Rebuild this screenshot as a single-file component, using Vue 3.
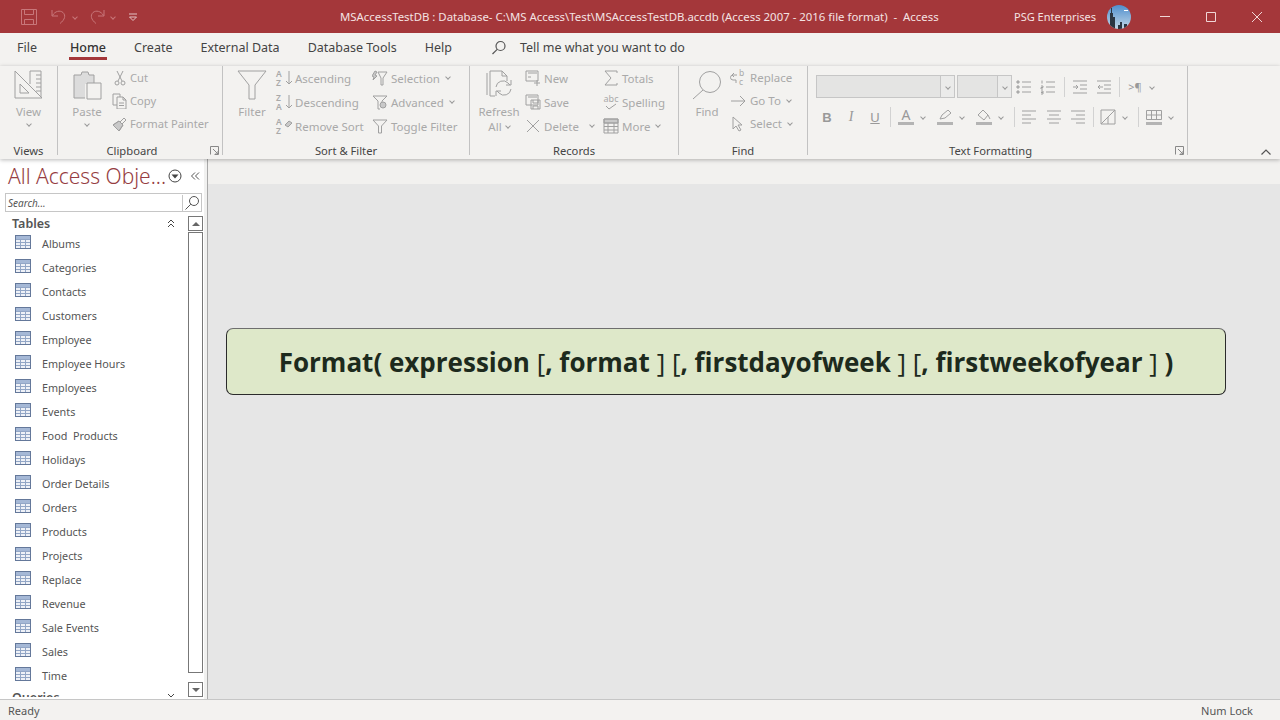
<template>
  <div class="app">
    <header class="titlebar">
      <div class="qat">
        <svg class="qat-save" width="18" height="18" viewBox="0 0 18 18"><path d="M1.500 1.500h15v15h-15zM4.500 1.500v5h9v-5M4.500 16.500v-5h9v5" /></svg>
        <svg class="qat-undo" width="18" height="18" viewBox="0 0 18 18"><path d="M2 2v6h6M2.500 7.500C5 3 10 2 13 4.500c3 3 2 7-3 11" /></svg>
        <i class="chev qc"></i>
        <svg class="qat-redo" width="18" height="18" viewBox="0 0 18 18"><path d="M16 2v6h-6M15.500 7.500C13 3 8 2 5 4.500c-3 3-2 7 3 11" /></svg>
        <i class="chev qc"></i>
        <svg class="qat-more" width="10" height="10" viewBox="0 0 10 10"><path d="M1 2h8M1.500 5h7L5 8.500z" /></svg>
      </div>
      <div class="doc-title">MSAccessTestDB : Database- C:\MS Access\Test\MSAccessTestDB.accdb (Access 2007 - 2016 file format)&nbsp; -&nbsp; Access</div>
      <div class="user">PSG Enterprises</div>
      <svg class="avatar" width="24" height="24" viewBox="0 0 24 24">
        <defs>
          <clipPath id="av"><circle cx="12" cy="12" r="12" /></clipPath>
          <linearGradient id="sky" x1="0" y1="0" x2="0" y2="1"><stop offset="0" stop-color="#4f8fce" /><stop offset="1" stop-color="#c3d6e6" /></linearGradient>
        </defs>
        <g clip-path="url(#av)">
          <rect width="24" height="24" fill="url(#sky)" />
          <path d="M3 24V8h1V3h1v5h1v4h2v12zM11 24v-4h2v-3h2v7zM17 24v-5h3v5z" fill="#2b3542" />
          <path d="M17 5h4v1h-4z" fill="#fff" />
        </g>
      </svg>
      <div class="win-btns">
        <svg width="12" height="12" viewBox="0 0 12 12"><path d="M1 5.500h10" /></svg>
        <svg width="12" height="12" viewBox="0 0 12 12"><path d="M1.500 1.500h9v9h-9z" /></svg>
        <svg width="12" height="12" viewBox="0 0 12 12"><path d="M1 1l10 10M11 1L1 11" /></svg>
      </div>
    </header>

    <nav class="tabs">
      <span v-for="t in tabs" :key="t" class="tab" :class="{ active: t === 'Home' }">{{ t }}</span>
      <svg class="tell-icon" width="16" height="16" viewBox="0 0 16 16"><circle cx="9.500" cy="6" r="4.500" /><path d="M6.200 9.300L1.500 14" /></svg>
      <span class="tell">Tell me what you want to do</span>
    </nav>

    <section class="ribbon">
      <!-- Views -->
      <div class="group g-views">
        <div class="body">
          <div class="large view-btn">
            <svg width="30" height="30" viewBox="0 0 30 30">
              <path d="M1 1l27 27H1zM6 14l9 9H6zM16 14V1h11v26M22 5h5M22 9h5M22 13h5M22 17h5M22 21h5" />
            </svg>
            <span>View</span>
            <i class="chev"></i>
          </div>
        </div>
        <div class="glabel">Views</div>
      </div>

      <!-- Clipboard -->
      <div class="group g-clip">
        <div class="body">
          <div class="large paste-btn">
            <svg width="30" height="30" viewBox="0 0 30 30">
              <path class="pale" d="M2 5h7l1-3h6l1 3h5v9H13v14H2z" />
              <path d="M2 5h7l1-3h6l1 3h5v9M2 5v23h11" />
              <path class="white" d="M15 13h14v16H15z" />
            </svg>
            <span>Paste</span>
            <i class="chev"></i>
          </div>
          <div class="smalls tight">
            <div class="row">
              <svg width="16" height="16" viewBox="0 0 16 16"><path d="M5 1l5 10M11 1L6 11" /><circle cx="5" cy="13" r="2" /><circle cx="11" cy="13" r="2" /></svg>
              <span>Cut</span>
            </div>
            <div class="row">
              <svg width="16" height="16" viewBox="0 0 16 16"><path d="M5 12H1V1h7v3M5 4h6l3 3v9H5zM7 10h5M7 12.500h5M11 4v3h3" /></svg>
              <span>Copy</span>
            </div>
            <div class="row">
              <svg width="16" height="16" viewBox="0 0 16 16"><path class="fill" d="M1 9l6-4 4 4-4 6z" /><path d="M1 9l6-4 4 4-4 6zM8 6l4-4 2 2-4 4" /></svg>
              <span>Format Painter</span>
            </div>
          </div>
        </div>
        <div class="glabel">Clipboard</div>
        <svg class="launcher" width="9" height="9" viewBox="0 0 9 9"><path d="M.5 8.500v-8h8v8h-4M3 3l5 5M8 5v3H5" /></svg>
      </div>

      <!-- Sort & Filter -->
      <div class="group g-sort">
        <div class="body">
          <div class="large filter-btn">
            <svg width="30" height="30" viewBox="0 0 30 30"><path d="M1 1h28L18 15v14h-6V15z" /></svg>
            <span>Filter</span>
          </div>
          <div class="smalls col-a">
            <div class="row">
              <span class="az"><i>A</i><i>Z</i></span>
              <svg class="arrow" width="8" height="16" viewBox="0 0 8 16"><path d="M4 1v13M1 11l3 3 3-3" /></svg>
              <span>Ascending</span>
            </div>
            <div class="row">
              <span class="az"><i>Z</i><i>A</i></span>
              <svg class="arrow" width="8" height="16" viewBox="0 0 8 16"><path d="M4 1v13M1 11l3 3 3-3" /></svg>
              <span>Descending</span>
            </div>
            <div class="row">
              <span class="az"><i>A</i><i>Z</i></span>
              <svg class="arrow" width="8" height="16" viewBox="0 0 8 16"><path class="fill" d="M0 7l4-4 3 2-4 4z" /></svg>
              <span>Remove Sort</span>
            </div>
          </div>
          <div class="smalls col-b">
            <div class="row">
              <svg width="16" height="16" viewBox="0 0 16 16"><path d="M6 2h9l-4 6v7H9V8z" /><path class="fill" d="M3 1l2 1-2 3 2 1-4 4 1-3-2-1z" /></svg>
              <span>Selection</span><i class="chev"></i>
            </div>
            <div class="row">
              <svg width="16" height="16" viewBox="0 0 16 16"><path d="M1 2h14l-5 5v1M6 7L1 2M6 7v8h2" /><circle class="fill" cx="11" cy="11" r="3" /></svg>
              <span>Advanced</span><i class="chev"></i>
            </div>
            <div class="row">
              <svg width="16" height="16" viewBox="0 0 16 16"><path d="M1 2h14l-5.500 6v7h-3V8z" /></svg>
              <span>Toggle Filter</span>
            </div>
          </div>
        </div>
        <div class="glabel">Sort &amp; Filter</div>
      </div>

      <!-- Records -->
      <div class="group g-rec">
        <div class="body">
          <div class="large refresh-btn">
            <svg width="30" height="30" viewBox="0 0 30 30">
              <path d="M3 3v22M6 26V1h12l5 5v5M18 1v5h5M6 26h5" />
              <path d="M12 20a7 7 0 0 1 12-4l2 2M27 13v5h-5M27 22a7 7 0 0 1-12 4l-2-2M12 29v-5h5" transform="translate(0 -3)" />
            </svg>
            <span>Refresh</span>
            <span class="all">All <i class="chev"></i></span>
          </div>
          <div class="smalls col-c">
            <div class="row">
              <svg width="16" height="16" viewBox="0 0 16 16"><path d="M1 1h12v10H1zM3 3h9M3 7h3M9 13h6M12 10v6" /></svg>
              <span>New</span>
            </div>
            <div class="row">
              <svg width="16" height="16" viewBox="0 0 16 16"><path d="M1 1h12v10H1zM3 3h9M6 6h9v9H6zM8 6v3h5V6M8 15v-3h5v3" /></svg>
              <span>Save</span>
            </div>
            <div class="row">
              <svg width="16" height="16" viewBox="0 0 16 16"><path d="M2 2l12 12M14 2L2 14" /></svg>
              <span>Delete</span><i class="chev del"></i>
            </div>
          </div>
          <div class="smalls col-d">
            <div class="row">
              <svg width="16" height="16" viewBox="0 0 16 16"><path d="M14 3V1H2l6 7-6 7h12v-2" /></svg>
              <span>Totals</span>
            </div>
            <div class="row">
              <span class="abc">abc<svg width="14" height="7" viewBox="0 0 14 7"><path d="M2 3l3 3 7-5" /></svg></span>
              <span>Spelling</span>
            </div>
            <div class="row">
              <svg width="16" height="16" viewBox="0 0 16 16"><path class="fill" d="M1 1h14v4H1z" /><path d="M1 1h14v14H1zM1 5h14M1 8.500h14M1 12h14M5 5v10M11 5v10" /></svg>
              <span>More</span><i class="chev"></i>
            </div>
          </div>
        </div>
        <div class="glabel">Records</div>
      </div>

      <!-- Find -->
      <div class="group g-find">
        <div class="body">
          <div class="large find-btn">
            <svg width="30" height="30" viewBox="0 0 30 30"><circle cx="18" cy="12" r="10.500" /><path d="M11 20L1 29" /></svg>
            <span>Find</span>
          </div>
          <div class="smalls tight col-e">
            <div class="row">
              <span class="repl">
                <svg width="8" height="12" viewBox="0 0 8 12"><path d="M7 3H3a2.500 2.500 0 0 0 0 5h3v3M4 1L2 3l2 2" /></svg>
                <span class="bc"><i>b</i><i>c</i></span>
              </span>
              <span>Replace</span>
            </div>
            <div class="row">
              <svg width="16" height="16" viewBox="0 0 16 16"><path d="M1 8h14M10 3l5 5-5 5" /></svg>
              <span>Go To</span><i class="chev"></i>
            </div>
            <div class="row">
              <svg width="16" height="16" viewBox="0 0 16 16"><path d="M3 1v12l3-3 3 5 2-1-3-5h4z" /></svg>
              <span>Select</span><i class="chev"></i>
            </div>
          </div>
        </div>
        <div class="glabel">Find</div>
      </div>

      <!-- Text Formatting -->
      <div class="group g-text">
        <div class="fmt">
          <div class="fmt-row first">
            <div class="combo font-combo"><b></b><span class="drop"><i class="chev"></i></span></div>
            <div class="combo size-combo"><b></b><span class="drop"><i class="chev"></i></span></div>
            <span class="ic">
              <svg width="16" height="16" viewBox="0 0 16 16"><path d="M6 3h9M6 8h9M6 13h9" /><path class="fill" d="M1 2h2v2H1zM1 7h2v2H1zM1 12h2v2H1z" /></svg>
            </span>
            <span class="ic">
              <svg width="16" height="16" viewBox="0 0 16 16"><path d="M6 3h9M6 8h9M6 13h9M2 1.500v3M1 7h2v1.500H1V10h2M1 12h2v3H1M1 13.500h2" /></svg>
            </span>
            <i class="sep s4"></i>
            <span class="ic m3">
              <svg width="16" height="16" viewBox="0 0 16 16"><path d="M1 2h14M8 6h7M8 10h7M1 14h14M1 8h5M4 6l2 2-2 2" /></svg>
            </span>
            <span class="ic">
              <svg width="16" height="16" viewBox="0 0 16 16"><path d="M1 2h14M8 6h7M8 10h7M1 14h14M2 8h5M4 6L2 8l2 2" /></svg>
            </span>
            <i class="sep s3"></i>
            <span class="ic m3 para">&gt;¶</span>
            <i class="chev fc"></i>
          </div>
          <div class="fmt-row second">
            <span class="ic b">B</span>
            <span class="ic it">I</span>
            <span class="ic un">U</span>
            <i class="sep s3"></i>
            <span class="ic m3 stacked">
              <span class="a">A</span><em></em>
            </span>
            <i class="chev fc"></i>
            <span class="ic m5 stacked">
              <svg width="16" height="11" viewBox="0 0 16 11"><path d="M3 9l2-4 6-5 3 3-6 5z" /></svg><em></em>
            </span>
            <i class="chev fc"></i>
            <span class="ic m5 stacked">
              <svg width="16" height="11" viewBox="0 0 16 11"><path d="M2 5l5-5 5 5-4 5zM12 5l2 4" /></svg><em></em>
            </span>
            <i class="chev fc"></i>
            <i class="sep s8"></i>
            <span class="ic m2">
              <svg width="16" height="16" viewBox="0 0 16 16"><path d="M1 2h14M1 6h9M1 10h14M1 14h9" /></svg>
            </span>
            <span class="ic m1">
              <svg width="16" height="16" viewBox="0 0 16 16"><path d="M1 2h14M3 6h10M1 10h14M3 14h10" /></svg>
            </span>
            <span class="ic">
              <svg width="16" height="16" viewBox="0 0 16 16"><path d="M1 2h14M6 6h9M1 10h14M6 14h9" /></svg>
            </span>
            <i class="sep s3"></i>
            <span class="ic m2">
              <svg width="16" height="16" viewBox="0 0 16 16"><path d="M1 1h14v14H1zM1 15L15 1M8 8v7" /></svg>
            </span>
            <i class="chev fc"></i>
            <i class="sep s8"></i>
            <span class="ic m3 stacked">
              <svg width="16" height="11" viewBox="0 0 16 11"><path d="M.5.500h15v9H.5zM.5 5h15M5.500.500v9M10.500.500v9" /></svg><em></em>
            </span>
            <i class="chev fc"></i>
          </div>
        </div>
        <div class="glabel">Text Formatting</div>
        <svg class="launcher" width="9" height="9" viewBox="0 0 9 9"><path d="M.5 8.500v-8h8v8h-4M3 3l5 5M8 5v3H5" /></svg>
      </div>

      <svg class="collapse" width="12" height="8" viewBox="0 0 12 8"><path d="M1.500 6.500L6 2l4.500 4.500" /></svg>
    </section>

    <main class="main">
      <aside class="nav">
        <div class="nav-pane">
          <div class="nav-head">
            <span class="nav-title">All Access Obje...</span>
            <svg class="nav-drop" width="14" height="14" viewBox="0 0 14 14"><circle cx="7" cy="7" r="6" /><path class="solid" d="M3.500 5.500h7L7 9.500z" /></svg>
            <svg class="nav-collapse" width="10" height="10" viewBox="0 0 10 10"><path d="M5 1.500L1.500 5 5 8.500M9 1.500L5.500 5 9 8.500" /></svg>
          </div>
          <div class="search">
            <span>Search...</span>
            <svg width="16" height="16" viewBox="0 0 16 16"><circle cx="10" cy="6" r="4.500" /><path d="M6.800 9.200L1.500 14.500" /></svg>
          </div>
          <div class="nav-list">
            <div class="list-scroll">
              <div class="section">
                <span>Tables</span>
                <svg width="8" height="9" viewBox="0 0 8 9"><path d="M1 4l3-3 3 3M1 8l3-3 3 3" /></svg>
              </div>
              <div v-for="name in tables" :key="name" class="item">
                <svg width="16" height="14" viewBox="0 0 16 14">
                  <rect x=".5" y=".5" width="15" height="13" fill="#eef1f7" stroke="#64789a" />
                  <rect x="1" y="1" width="14" height="3" fill="#a5b8d6" />
                  <path d="M1 4.500h14M1 7.500h14M1 10.500h14M5.500 4v9M10.500 4v9" stroke="#92a6c6" fill="none" />
                </svg>
                <span>{{ name }}</span>
              </div>
              <div class="section last">
                <span>Queries</span>
                <svg width="8" height="9" viewBox="0 0 8 9"><path d="M1 1l3 3 3-3M1 5l3 3 3-3" /></svg>
              </div>
            </div>
            <div class="scrollbar">
              <div class="sb-btn"><i class="up"></i></div>
              <div class="sb-thumb"></div>
              <div class="sb-btn"><i class="down"></i></div>
            </div>
          </div>
        </div>
        <div class="splitter"></div>
      </aside>
      <div class="workspace">
        <div class="strip"></div>
        <div class="stage">
          <div class="syntax">
            <span>Format( expression <span class="br">[</span>, format <span class="br">]</span> <span class="br">[</span>, firstdayofweek <span class="br">]</span> <span class="br">[</span>, firstweekofyear <span class="br">]</span> )</span>
          </div>
        </div>
      </div>
    </main>

    <footer class="status">
      <span>Ready</span>
      <span>Num Lock</span>
    </footer>
  </div>
</template>

<script setup>
const tabs = ['File', 'Home', 'Create', 'External Data', 'Database Tools', 'Help']

const tables = [
  'Albums', 'Categories', 'Contacts', 'Customers', 'Employee', 'Employee Hours',
  'Employees', 'Events', 'Food  Products', 'Holidays', 'Order Details', 'Orders',
  'Products', 'Projects', 'Replace', 'Revenue', 'Sale Events', 'Sales', 'Time'
]
</script>

<style>
html, body { margin: 0; padding: 0; }
</style>

<style scoped>
.app {
  width: 1280px;
  height: 720px;
  display: flex;
  flex-direction: column;
  overflow: hidden;
  font-family: "Noto Sans", "Open Sans", sans-serif;
  font-size: 11.5px;
  color: #444;
  background: #e6e6e6;
}

/* title bar */
.titlebar {
  height: 33px;
  flex: none;
  display: flex;
  align-items: center;
  background: #a4373a;
  color: #f4e3e3;
}
.qat {
  width: 340px;
  flex: none;
  display: flex;
  align-items: center;
  padding-left: 20px;
  box-sizing: border-box;
}
.qat svg { fill: none; stroke: #c8777a; stroke-width: 1; }
.qat-undo { margin-left: 12px; }
.qat-redo { margin-left: 11px; }
.qat-more { margin-left: 13px; stroke: #e3c2c3 !important; }
.doc-title { width: 600px; flex: none; white-space: pre; font-size: 11.4px; }
.user { margin-left: 74px; font-size: 11px; white-space: nowrap; }
.avatar { margin-left: 11px; flex: none; }
.win-btns {
  margin-left: auto;
  display: flex;
  gap: 34px;
  padding-right: 17px;
}
.win-btns svg { fill: none; stroke: #f0d6d6; stroke-width: 1; }

/* tabs */
.tabs {
  height: 33px;
  flex: none;
  box-sizing: border-box;
  display: flex;
  align-items: center;
  background: #f3f2f0;
  padding: 0 0 4px 17px;
  font-size: 12.5px;
  color: #444;
}
.tab { position: relative; margin-right: 28px; white-space: nowrap; }
.tab:first-child { margin-right: 33px; }
.tab.active { color: #333; font-weight: 500; }
.tab.active::after {
  content: "";
  position: absolute;
  left: -1px;
  right: -1px;
  bottom: -4px;
  height: 3px;
  background: #a4373a;
}
.tell-icon { margin-left: 11px; fill: none; stroke: #555; stroke-width: 1.2; }
.tell { margin-left: 13px; }

/* ribbon */
.ribbon {
  position: relative;
  z-index: 2;
  height: 93px;
  flex: none;
  display: flex;
  background: #f3f2f0;
  box-shadow: 0 1px 4px rgba(0, 0, 0, 0.28);
  color: #a9a9a9;
}
.group {
  position: relative;
  display: flex;
  flex-direction: column;
  height: 89px;
  box-sizing: border-box;
  border-right: 1px solid #c2c2c2;
}
.g-views { width: 58px; }
.g-clip { width: 165px; }
.g-sort { width: 247px; }
.g-rec { width: 209px; }
.g-find { width: 129px; }
.g-text { width: 380px; }
.body { display: flex; height: 74px; }
.glabel {
  margin-top: auto;
  margin-bottom: -4px;
  height: 17px;
  line-height: 17px;
  text-align: center;
  color: #444;
  font-size: 11.2px;
}
.g-clip .glabel { padding-right: 16px; }
.g-text .glabel { padding-right: 14px; }
.launcher {
  position: absolute;
  right: 3px;
  bottom: 0;
  fill: none;
  stroke: #888;
  stroke-width: 1;
}
.large {
  display: flex;
  flex-direction: column;
  align-items: center;
  padding-top: 4px;
  line-height: 16px;
}
.large svg { margin-bottom: 4px; flex: none; }
.body svg, .fmt svg { fill: none; stroke: #a0a0a0; stroke-width: 1; }
.body svg .fill, .fmt svg .fill { fill: #c9c9c9; }
.body svg .pale { fill: #dcdcdc; stroke: none; }
.body svg .white { fill: #f3f2f0; }

.chev {
  display: inline-block;
  flex: none;
  width: 4px;
  height: 4px;
  box-sizing: border-box;
  border-right: 1px solid #9a9a9a;
  border-bottom: 1px solid #9a9a9a;
  transform: rotate(45deg);
}
.chev.qc { border-color: #c8777a; margin-left: 5px; }
.large > .chev { margin-top: 2px; }
.row .chev { margin: -2px 0 0 6px; }
.row .chev.del { margin-left: 11px; }
.view-btn { width: 58px; }
.paste-btn { width: 34px; margin-left: 12px; }
.filter-btn { width: 30px; margin-left: 14px; }
.refresh-btn { width: 50px; margin-left: 4px; }
.find-btn { width: 30px; margin-left: 13px; }
.all { display: flex; gap: 4px; align-items: center; height: 14px; }
.all .chev { margin-top: -2px; }
.smalls { display: flex; flex-direction: column; }
.row {
  display: flex;
  align-items: center;
  height: 24px;
  white-space: nowrap;
}
.row > svg, .row > .abc, .row > .repl { margin-right: 3px; flex: none; }
.tight .row { height: 23px; }
.g-clip .smalls { margin-left: 8px; font-size: 11.2px; }
.g-clip .row > svg { margin-right: 2px; }
.col-a { margin-left: 9px; width: 96px; }
.col-c { margin-left: 1px; width: 78px; }
.col-e { margin-left: 8px; }
.col-e .row > svg, .col-e .repl { margin-right: 4px; }
.az {
  display: flex;
  flex-direction: column;
  width: 9px;
  line-height: 9px;
  font-size: 8.5px;
  font-weight: 600;
}
.az i { font-style: normal; }
.arrow { margin-right: 2px !important; }
.abc {
  display: flex;
  flex-direction: column;
  align-items: center;
  width: 16px;
  font-size: 9px;
  line-height: 9px;
}
.repl { display: flex; align-items: center; width: 16px; }
.bc { display: flex; flex-direction: column; margin-left: 1px; font-size: 8.5px; line-height: 8.500px; }
.bc i { font-style: normal; }

/* text formatting */
.fmt { padding: 9px 0 0 8px; }
.fmt-row { display: flex; align-items: center; }
.fmt-row.first { height: 23px; }
.fmt-row.second { height: 24px; margin: 7px 0 0 -1px; }
.combo {
  display: flex;
  height: 23px;
  box-sizing: border-box;
  border: 1px solid #c6c6c6;
  background: #e4e4e3;
}
.combo b { flex: 1; }
.drop {
  width: 13px;
  display: flex;
  align-items: center;
  justify-content: center;
  background: #ebebea;
  border-left: 1px solid #c6c6c6;
}
.font-combo { width: 139px; margin-right: 2px; }
.size-combo { width: 55px; }
.ic {
  width: 24px;
  flex: none;
  display: flex;
  flex-direction: column;
  align-items: center;
  justify-content: center;
  font-size: 13px;
  color: #999;
}
.ic.b { font-weight: 700; font-family: "Liberation Sans", sans-serif; }
.ic.it { font-style: italic; font-family: "Liberation Serif", serif; font-size: 14px; }
.ic.un { text-decoration: underline; font-family: "Liberation Sans", sans-serif; }
.ic.para { font-size: 11px; }
.stacked .a { line-height: 12px; font-size: 14px; }
.stacked em { display: block; width: 16px; height: 3px; background: #b4b4b4; margin-top: 1px; }
.m1 { margin-left: 1px; }
.m2 { margin-left: 2px; }
.m3 { margin-left: 3px; }
.m5 { margin-left: 5px; }
.sep { width: 1px; height: 20px; background: #d2d2d2; flex: none; }
.s3 { margin-left: 3px; }
.s4 { margin-left: 4px; }
.s8 { margin-left: 8px; }
.chev.fc { margin: 0 3px; }
.collapse {
  position: absolute;
  right: 8px;
  bottom: 3px;
  fill: none;
  stroke: #555;
  stroke-width: 1.2;
}

/* main */
.main { flex: 1; min-height: 0; display: flex; }
.nav { width: 208px; flex: none; display: flex; }
.nav-pane {
  flex: 1;
  min-width: 0;
  display: flex;
  flex-direction: column;
  background: #fff;
}
.splitter {
  width: 4px;
  box-sizing: border-box;
  background: #f1f1f0;
  border-right: 1px solid #a9a9a9;
}
.nav-head {
  height: 34px;
  flex: none;
  display: flex;
  align-items: center;
  padding-left: 8px;
}
.nav-title {
  width: 160px;
  font-size: 21px;
  color: #963d42;
  white-space: nowrap;
  font-weight: 300;
}
.nav-drop { fill: none; stroke: #444; stroke-width: 1; }
.nav-drop .solid { fill: #444; stroke: none; }
.nav-collapse { margin-left: 8px; fill: none; stroke: #555; stroke-width: 1; }
.search {
  height: 19px;
  margin: 0 2px 0 5px;
  flex: none;
  box-sizing: border-box;
  display: flex;
  align-items: center;
  justify-content: space-between;
  border: 1px solid #c6c6c6;
  padding: 0 0 0 2px;
  font-size: 10px;
  font-style: italic;
  color: #555;
}
.search svg {
  fill: none;
  stroke: #555;
  stroke-width: 1;
  border-left: 1px solid #c6c6c6;
  padding: 0 1px;
}
.nav-list { flex: 1; min-height: 0; display: flex; padding: 4px 0 2px; }
.list-scroll { flex: 1; min-width: 0; overflow: hidden; }
.section {
  display: flex;
  justify-content: space-between;
  align-items: center;
  height: 15px;
  padding: 0 13px 0 12px;
  font-size: 12.500px;
  font-weight: 600;
  color: #555;
}
.section svg { fill: none; stroke: #444; stroke-width: 1; flex: none; }
.section.last { margin-top: 3px; }
.item {
  display: flex;
  align-items: center;
  height: 24px;
  padding-left: 15px;
  font-size: 10.8px;
  color: #555;
  white-space: pre;
}
.item svg { flex: none; margin-right: 11px; margin-top: -2px; }
.scrollbar {
  width: 15px;
  flex: none;
  margin-right: 1px;
  display: flex;
  flex-direction: column;
  gap: 1px;
}
.sb-btn {
  height: 15px;
  flex: none;
  box-sizing: border-box;
  border: 1px solid #777;
  display: flex;
  align-items: center;
  justify-content: center;
}
.sb-btn i { width: 0; height: 0; border-left: 4px solid transparent; border-right: 4px solid transparent; }
.sb-btn .up { border-bottom: 4px solid #666; }
.sb-btn .down { border-top: 4px solid #666; }
.sb-thumb { flex: 1; border: 1px solid #777; margin-bottom: 8px; }

.workspace { flex: 1; min-width: 0; display: flex; flex-direction: column; }
.strip { height: 25px; flex: none; background: #f2f1ef; }
.stage { flex: 1; padding: 144px 54px 0 18px; background: #e6e6e6; }
.syntax {
  height: 67px;
  box-sizing: border-box;
  display: flex;
  align-items: center;
  justify-content: center;
  white-space: pre;
  border: 1px solid #2b2b2b;
  border-top-color: #6e6e6e;
  border-radius: 7px;
  background: #dee8c9;
  color: #1d2a1d;
  font-family: "Open Sans", "Noto Sans", sans-serif;
  font-size: 26px;
  font-weight: 700;
}
.br { font-weight: 400; }

.status {
  height: 21px;
  flex: none;
  position: relative;
  z-index: 1;
  box-sizing: border-box;
  display: flex;
  align-items: center;
  justify-content: space-between;
  padding: 0 27px 0 8px;
  background: #f3f2f0;
  border-top: 1px solid #c6c6c6;
  font-size: 11px;
  color: #555;
}
</style>
